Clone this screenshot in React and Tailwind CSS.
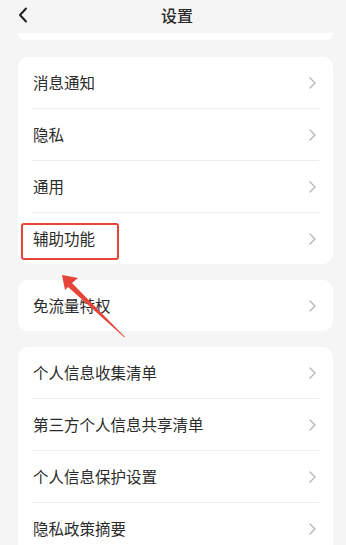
import React from "react";

const GROUPS = [
  ["消息通知", "隐私", "通用", "辅助功能"],
  ["免流量特权"],
  ["个人信息收集清单", "第三方个人信息共享清单", "个人信息保护设置", "隐私政策摘要"],
];

function Chevron() {
  return (
    <svg width="7" height="12" viewBox="0 0 7 12" fill="none" className="mr-[3px]">
      <path d="M1 1l5 5-5 5" stroke="#b4b4b4" strokeWidth="1.3" strokeLinecap="round" strokeLinejoin="round" />
    </svg>
  );
}

function Row({ label, last }) {
  return (
    <div className={`flex items-center justify-between ${last ? "h-[51px]" : "h-[52px] border-b border-[#eeeeee]"}`}>
      <span className="pl-[1px] text-[15.5px] text-[#2b2b2b]">{label}</span>
      <Chevron />
    </div>
  );
}

export default function App() {
  return (
    <div
      className="relative w-[346px] h-[545px] overflow-hidden bg-[#f5f5f5]"
      style={{ fontFamily: '"Noto Sans CJK SC", "Noto Sans", sans-serif' }}
    >
      <div className="relative h-[33px] flex items-center justify-center pb-[3px]">
        <svg width="12" height="16" viewBox="0 0 12 16" fill="none" className="absolute left-[17px] top-[7px]">
          <path d="M9 1.5L3 8l6 6.5" stroke="#222222" strokeWidth="2" strokeLinecap="round" strokeLinejoin="round" />
        </svg>
        <span className="pl-[8px] text-[16px] font-medium text-[#2a2a2a]">设置</span>
      </div>
      <div className="ml-[18px] w-[315px] h-[7px] bg-white rounded-b-[10px]" />

      <div className="flex flex-col gap-[16px] mt-[17px]">
        {GROUPS.map((rows, gi) => (
          <div key={gi} className="ml-[18px] w-[315px] bg-white rounded-[10px] px-[14px]">
            {rows.map((r, i) => (
              <Row key={r} label={r} last={i === rows.length - 1} />
            ))}
          </div>
        ))}
      </div>

      <div className="absolute left-[21px] top-[223px] w-[98px] h-[37px] border-2 border-[#e8453a] rounded-[3px]" />
      <svg width="346" height="545" className="absolute left-0 top-0 pointer-events-none">
        <polygon points="62,275 78,278 72,283 125,337 124.5,337.5 68,287 65,290" fill="#e8453a" />
      </svg>
    </div>
  );
}
